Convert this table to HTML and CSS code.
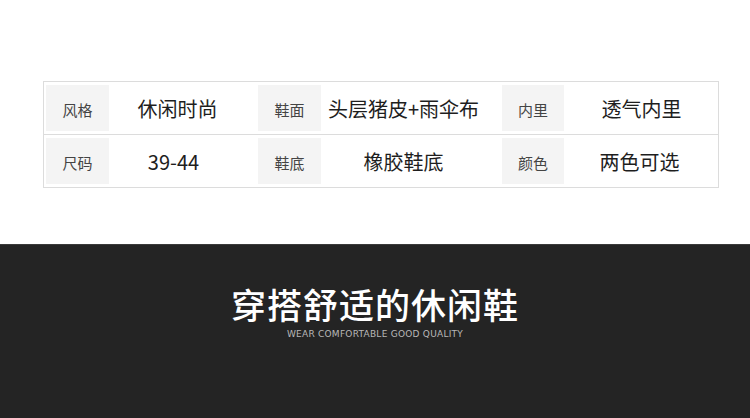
FILE: index.html
```html
<!DOCTYPE html>
<html lang="zh-CN">
<head>
  <meta charset="UTF-8" />
  <meta name="viewport" content="width=device-width, initial-scale=1.0"/>
  <title>商品参数</title>
  <link rel="stylesheet" href="styles.css">
</head>
<body>
  <section class="params">
    <div class="specs">
      <div class="spec-row">
        <div class="label">风格</div>
        <div class="value value-a">休闲时尚</div>
        <div class="label">鞋面</div>
        <div class="value value-b">头层猪皮+雨伞布</div>
        <div class="label">内里</div>
        <div class="value value-c">透气内里</div>
      </div>
      <div class="spec-row">
        <div class="label">尺码</div>
        <div class="value value-num">39-44</div>
        <div class="label">鞋底</div>
        <div class="value value-b">橡胶鞋底</div>
        <div class="label">颜色</div>
        <div class="value">两色可选</div>
      </div>
    </div>
  </section>

  <section class="banner">
    <h1>穿搭舒适的休闲鞋</h1>
    <p class="sub">WEAR COMFORTABLE GOOD QUALITY</p>
  </section>
</body>
</html>
```

FILE: styles.css
```css
:root {
  --line:   #dcdcdc;
  --cell:   #f4f4f4;
  --label:  #444;
  --text:   #1e1e1e;
  --dark:   #242424;
}
* { box-sizing: border-box; margin: 0; padding: 0; }
body {
  width: 750px;
  height: 418px;
  overflow: hidden;
  background: #fff;
  font-family: "Noto Sans CJK SC", "Noto Sans", sans-serif;
}

/* parameter table */
.params {
  height: 244px;
  padding: 81px 0 0 43px;
}
.specs {
  width: 676px;
  border: 1px solid var(--line);
}
.spec-row {
  display: grid;
  grid-template-columns: 63px 149px 63px 181px 62px 1fr;
  height: 53px;
  padding: 3px 3px 3px 2px;
  border-bottom: 1px solid var(--line);
}
.spec-row:last-child {
  height: 52px;
  border-bottom: none;
}
.label,
.value {
  display: flex;
  align-items: center;
  justify-content: center;
}
.label {
  background: var(--cell);
  color: var(--label);
  font-size: 15px;
  padding-top: 3px;
}
.value {
  color: var(--text);
  font-size: 20px;
}
.value-a   { padding-right: 12px; }
.value-b   { padding-right: 16px; }
.value-c   { padding-left: 4px; }
.value-num { padding-right: 20px; }

/* dark banner */
.banner {
  height: 174px;
  background: var(--dark);
  border-top: 1px solid #3a3a3a;
  text-align: center;
  padding-top: 35px;
}
.banner h1 {
  color: #fff;
  font-size: 35px;
  font-weight: 500;
  letter-spacing: 1px;
  line-height: 48px;
}
.sub {
  margin-top: 1px;
  color: #b8b8b8;
  font-family: "DejaVu Sans", sans-serif;
  font-size: 9px;
  letter-spacing: 0.25px;
}
```
